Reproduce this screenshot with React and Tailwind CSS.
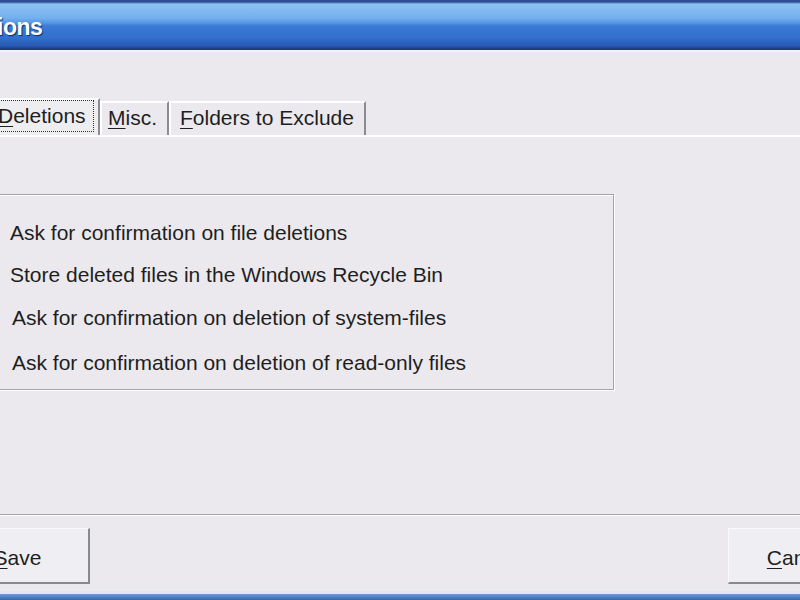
import React from 'react';

function Mn({ children }) {
  return <span className="underline underline-offset-[3px] decoration-1">{children}</span>;
}

const rows = [
  { label: 'Ask for confirmation on file deletions', mt: 'mt-[26px]', pl: 'pl-[29px]' },
  { label: 'Store deleted files in the Windows Recycle Bin', mt: 'mt-[18px]', pl: 'pl-[29px]' },
  { label: 'Ask for confirmation on deletion of system-files', mt: 'mt-[19px]', pl: 'pl-[31px]' },
  { label: 'Ask for confirmation on deletion of read-only files', mt: 'mt-[21px]', pl: 'pl-[31px]' },
];

export default function App() {
  return (
    <div
      className="w-[800px] h-[600px] overflow-hidden flex flex-col bg-[#ebe9ed] text-[#1e1e1e] text-[21px]"
      style={{ fontFamily: '"Liberation Sans", Arial, sans-serif' }}
    >
      {/* title bar */}
      <div className="h-[50px] shrink-0 flex items-center bg-[linear-gradient(to_bottom,#2d4f96_0px,#2d4f96_2px,#8ec2f5_4px,#74b0ee_18px,#5596e4_23px,#3a7bd6_26px,#3170cc_38px,#2a58b6_46px,#1d3a7a_49px,#1d3a7a_50px)]">
        <span className="-ml-[3px] mt-[4px] font-bold text-[23px] tracking-[-0.5px] text-white [text-shadow:1px_1px_1px_#0c2a6a]">
          ions
        </span>
      </div>
      <div className="h-[2px] shrink-0 bg-[#f4f4f8]" />

      {/* tabs */}
      <div className="mt-[46px] h-[39px] shrink-0 flex items-end border-b-2 border-white">
        <div className="-ml-[20px] w-[120px] h-[37px] flex items-center justify-end pr-[4px] pb-[3px] border-t-2 border-white border-r-2 border-r-[#8c8c90] bg-[#eeedf0]">
          <div className="h-[32px] w-[100px] flex items-center pl-[3px] border border-dotted border-[#333]">
            <span><Mn>D</Mn>eletions</span>
          </div>
        </div>
        <div className="w-[69px] h-[34px] flex items-center pl-[6px] pb-[2px] border-t-2 border-l-2 border-white border-r-2 border-r-[#8c8c90]">
          <span><Mn>M</Mn>isc.</span>
        </div>
        <div className="w-[197px] h-[34px] flex items-center pl-[9px] pb-[2px] border-t-2 border-l-2 border-white border-r-2 border-r-[#8c8c90]">
          <span><Mn>F</Mn>olders to Exclude</span>
        </div>
      </div>

      {/* group box */}
      <div className="-ml-[20px] mt-[57px] w-[634px] h-[196px] shrink-0 border border-[#a3a3aa] shadow-[1px_1px_0_#ffffff,inset_1px_1px_0_#ffffff] flex flex-col">
        {rows.map((r) => (
          <div key={r.label} className={`${r.mt} ${r.pl} h-[24px] leading-[24px] whitespace-nowrap`}>
            {r.label}
          </div>
        ))}
      </div>

      {/* separator */}
      <div className="mt-[124px] shrink-0 h-[1px] bg-[#a0a0a6]" />
      <div className="shrink-0 h-[1px] bg-white" />

      {/* buttons */}
      <div className="mt-[12px] flex justify-between shrink-0">
        <div className="-ml-[54px] w-[144px] h-[56px] flex items-center justify-center pt-[4px] border-t border-l border-[#fafafa] border-r-2 border-b-2 border-r-[#8a8a8e] border-b-[#8a8a8e] bg-[#efeef2]">
          <span><Mn>S</Mn>ave</span>
        </div>
        <div className="-mr-[72px] w-[144px] h-[56px] flex items-center justify-center pt-[4px] border-t border-l border-[#fafafa] border-r-2 border-b-2 border-r-[#8a8a8e] border-b-[#8a8a8e] bg-[#efeef2]">
          <span><Mn>C</Mn>ancel</span>
        </div>
      </div>

      <div className="mt-auto h-[3px] shrink-0 bg-[#dfe7f4]" />
      <div className="h-[6px] shrink-0 bg-[linear-gradient(to_bottom,#6f9ad6,#3566b8)]" />
    </div>
  );
}
